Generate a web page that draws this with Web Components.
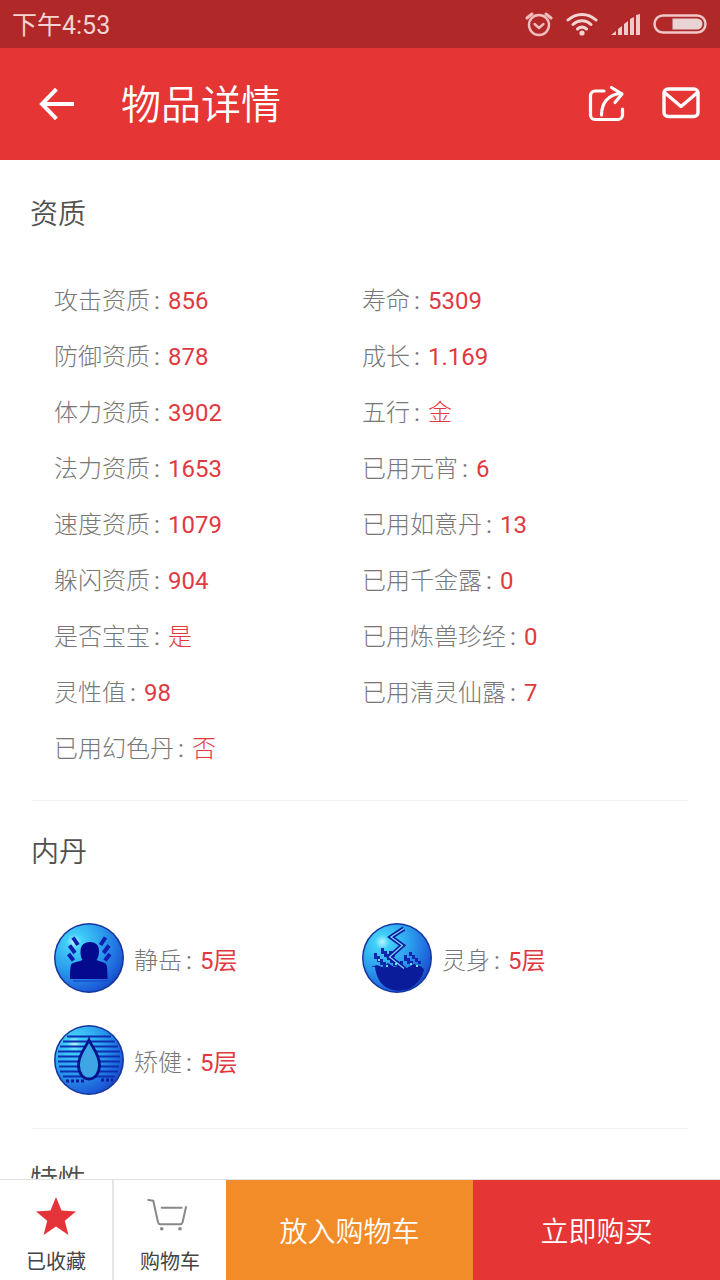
<!DOCTYPE html>
<html lang="zh-CN"><head><meta charset="utf-8"><title>物品详情</title>
<style>
html,body{margin:0;padding:0;background:#fff}
body{font-family:Roboto,"Noto Sans CJK SC",sans-serif;width:720px;height:1280px;overflow:hidden}
app-shell{height:1280px}
</style></head>
<body>
<app-shell>
  <status-bar slot="status" time="下午4:53"></status-bar>
  <app-header slot="header" title="物品详情"></app-header>
  <spec-section heading="资质" first>
    <spec-item label="攻击资质">856</spec-item><spec-item label="寿命">5309</spec-item>
    <spec-item label="防御资质">878</spec-item><spec-item label="成长">1.169</spec-item>
    <spec-item label="体力资质">3902</spec-item><spec-item label="五行" cjk>金</spec-item>
    <spec-item label="法力资质">1653</spec-item><spec-item label="已用元宵">6</spec-item>
    <spec-item label="速度资质">1079</spec-item><spec-item label="已用如意丹">13</spec-item>
    <spec-item label="躲闪资质">904</spec-item><spec-item label="已用千金露">0</spec-item>
    <spec-item label="是否宝宝" cjk>是</spec-item><spec-item label="已用炼兽珍经">0</spec-item>
    <spec-item label="灵性值">98</spec-item><spec-item label="已用清灵仙露">7</spec-item>
    <spec-item label="已用幻色丹" cjk>否</spec-item>
  </spec-section>
  <spec-section heading="内丹" dan>
    <dan-item icon="1" label="静岳">5层</dan-item><dan-item icon="2" label="灵身">5层</dan-item>
    <dan-item icon="3" label="矫健">5层</dan-item>
  </spec-section>
  <spec-section heading="特性" last></spec-section>
  <action-bar slot="footer"></action-bar>
</app-shell>
<script>
function def(name, css, html){
  customElements.define(name, class extends HTMLElement{
    connectedCallback(){
      if(this.shadowRoot) return;
      const r=this.attachShadow({mode:'open'});
      r.innerHTML='<style>'+css+'</style>'+(typeof html==='function'?html(this):html);
    }
  });
}
def('app-shell',`:host{display:flex;flex-direction:column;width:720px;overflow:hidden}
.main{flex:1;min-height:0;overflow:hidden}`,
`<slot name="status"></slot><slot name="header"></slot><div class="main"><slot></slot></div><slot name="footer"></slot>`);

def('status-bar',`:host{display:flex;align-items:center;height:48px;flex:none;background:#b02828;color:#f3d3d3;padding:0 12px;box-sizing:border-box}
.t{font-size:25px;flex:1;height:48px;line-height:52px}
svg{display:block;flex:none}`,
h=>`<span class="t">${h.getAttribute('time')}</span>
<svg width="28" height="26" viewBox="0 0 28 26" fill="none" stroke="#f0bcbc" stroke-width="2.4" stroke-linecap="round" stroke-linejoin="round" style="margin-right:13px;margin-top:-1px;margin-left:-1px">
<circle cx="14" cy="14" r="10"/><path d="M9.5 13l4.5 4 4.5-4"/><path d="M2 7l5-4M26 7l-5-4" stroke-width="3"/></svg>
<svg width="32" height="24" viewBox="0 0 32 24" fill="none" stroke="#f3d3d3" stroke-width="3" stroke-linecap="round" style="margin-right:13px;margin-top:-1px">
<path d="M2 8c8-7.500 20-7.500 28 0M7 12.500c5.500-5 12.500-5 18 0M11.500 17c3-2.500 6-2.500 9 0"/><circle cx="16" cy="21" r="2.600" fill="#f3d3d3" stroke="none"/></svg>
<svg width="31" height="22" viewBox="0 0 31 22" fill="#f0c8c8" style="margin-right:11px;margin-top:1px">
<path d="M0 21l5-4v4zM7 15l4-3v9H7zM13 10l4-3v14h-4zM19 5l4-2v18h-4zM25 1l4-1v21h-4z"/></svg>
<svg width="54" height="20" viewBox="0 0 54 20" style="margin-right:1px"><rect x="1.500" y="1.500" width="51" height="17" rx="8.500" fill="none" stroke="#f0c8c8" stroke-width="2.500"/><path d="M19.500 4.500H44a5.500 5.500 0 0 1 0 11H19.500z" fill="#e8d4d4"/></svg>`);

def('app-header',`:host{display:flex;align-items:center;height:112px;flex:none;background:#e53535;color:#fff}
.b{width:121px;flex:none;display:flex;padding-left:39px;box-sizing:border-box}
.t{flex:1;font-size:40px;height:112px;line-height:116px;font-weight:350}
svg{display:block;flex:none}`,
h=>`<div class="b"><svg width="36" height="34" viewBox="0 0 36 34" fill="none" stroke="#fff" stroke-width="4" stroke-linecap="square"><path d="M33 17H5M16 3.500L3 17l13 13.500"/></svg></div>
<div class="t">${h.getAttribute('title')}</div>
<svg width="38" height="38" viewBox="0 0 38 38" fill="none" stroke="#fff" stroke-width="3.200" stroke-linecap="round" stroke-linejoin="round" style="margin-right:36px;margin-top:-1px">
<path d="M16 6H7a4.500 4.500 0 0 0-4.500 4.500V30A4.500 4.500 0 0 0 7 34.500h23a4.500 4.500 0 0 0 4.500-4.500V24"/><path d="M13.500 30c0-11 6-21 20-21.500"/><path d="M23.500 2.500L34 9l-7 8.500"/></svg>
<svg width="38" height="32" viewBox="0 0 38 32" fill="none" stroke="#fff" stroke-width="3.400" stroke-linecap="round" stroke-linejoin="round" style="margin-right:20px;margin-top:-3px">
<rect x="2" y="2" width="34" height="27.500" rx="4"/><path d="M2.500 5.500L19 19.500 35.500 5.500"/></svg>`);

def('spec-section',`:host{display:block;padding:0 32px 0 30px;width:720px;box-sizing:border-box}
:host([first]){margin-top:1px}
.h{font-size:28px;line-height:104px;height:104px;color:#505050;font-weight:350}
:host([first]) .h{line-height:108px}
:host([dan]) .h{padding-left:1px}
.g{display:grid;grid-template-columns:308px 1fr;padding:8px 0 23px 24px}
:host([dan]) .g{padding:2px 0 17px 24px}
:host([last]) .g{display:none}
.line{height:1px;background:#f2f2f2;margin-left:2px}
:host([last]) .line{display:none}`,
h=>`<div class="h">${h.getAttribute('heading')}</div><div class="g"><slot></slot></div><div class="line"></div>`);

const ITEM=`font-size:24px;color:#777;white-space:nowrap;font-weight:300`;
const PARTS=`.c{display:inline-block;width:18px;padding-left:4px;box-sizing:border-box;font-weight:400}
.v{color:#e03a3f;font-weight:400}`;
def('spec-item',`:host{display:flex;align-items:baseline;height:56px;line-height:56px;${ITEM}}
:host([cjk]) .v{font-weight:300}
${PARTS}`,
h=>`<span>${h.getAttribute('label')}</span><span class="c">:</span><span class="v"><slot></slot></span>`);

const ICONS={
1:`<path d="M36 19c6 0 9 3.500 9 9.500 0 3.500-1 6.500-2.500 8.500 3.500 1.500 6.500 2 9 3.500 1.500 1 2 5.500 2 15.500H16c0-10 .5-14.500 2-15.500 3-1.500 7.500-2 10.500-3.500-1.500-2-2-5-2-8.500 0-6 3.500-9.500 9.500-9.500z" fill="#040a8e"/>
<path d="M19 58h34" stroke="#1b4ed0" stroke-width="1.500"/>
<g fill="none" stroke="#0f1eb0" stroke-width="4"><path d="M19 14.500l5 7.500M15.500 22.500l5.500 7.500M14.500 31l5 6.500"/><path d="M51.500 14.500l-5 7.500M55 22.500l-5.500 7.500M56 31l-5 6.500"/></g>`,
2:`<path d="M9 44l6-2 5 2 6-4 6 4 7-2 6 3 7-4 6 2 4 3c-1 8-7 16-15 20-9 3-18 2-25-3-5-4-8-11-9-19z" fill="#0a1c9a"/>
<g fill="#0c26ac"><path d="M12 30h3v3h3v3h3v3h3v3h3v3h-6v-3h-3v-3h-3v-3h-3zM19 25h3v3h3v3h3v3h3v3h3v6h-3v-3h-3v-3h-3v-3h-3v-3h-3zM27 28h3v3h3v3h-3v-3h-3z"/><path d="M42 32h3v3h3v3h3v3h-6v-3h-3zM47 29h3v3h3v3h3v3h3v3h-3v-2h-3v-3h-3v-3h-3zM38 38h3v4h-3z"/></g>
<path d="M42 5.500L29 14l11.500 8.500L27.500 34l14.500 11.500" fill="none" stroke="#0a1ca0" stroke-width="4.600" stroke-linejoin="miter"/>
<path d="M42 5.500L29 14l11.500 8.500L27.500 34l14.500 11.500" fill="none" stroke="#7fd8ff" stroke-width="1.200"/>
<g fill="#7fd8ff"><rect x="16" y="36" width="2" height="2"/><rect x="24" y="42" width="2" height="2"/><rect x="33" y="40" width="2" height="2"/><rect x="48" y="40" width="2" height="2"/><rect x="54" y="42" width="2" height="2"/></g>`,
3:`<g stroke="#0c2eb0" stroke-width="1.900" fill="none"><path d="M13 11.500h44M9 16.500h52M6 21.500h58M4 26.500h62M4 31.500h62M4 36.500h62M5 41.500h60M6 46.500h58M9 51.500h52"/></g>
<path d="M35 15c3 7 10.500 14 10.500 25 0 8-4.500 14-10.500 14s-10.500-6-10.500-14c0-11 7.500-18 10.500-25z" fill="#3fa6e6" stroke="#04128c" stroke-width="2.800"/>
<path d="M47 55h12M12 56h20" stroke="#0a1c9a" stroke-width="3" stroke-dasharray="3 2"/>`};
def('dan-item',`:host{display:flex;align-items:center;height:102px;line-height:56px;${ITEM}}
svg{display:block;flex:none;margin-right:10px}
.w{display:flex;align-items:baseline;padding-top:6px}
${PARTS}`,
h=>{const i=h.getAttribute('icon');return `<svg width="70" height="70" viewBox="0 0 70 70">
<defs><radialGradient id="o${i}" cx="28%" cy="26%" r="92%"><stop offset="0" stop-color="#b6f6ff"/><stop offset=".12" stop-color="#42d0fa"/><stop offset=".48" stop-color="#2a9aec"/><stop offset=".82" stop-color="#1c5cd8"/><stop offset="1" stop-color="#123a9f"/></radialGradient></defs>
<circle cx="35" cy="35" r="35" fill="#14349f"/><circle cx="35" cy="35" r="33.500" fill="url(#o${i})"/>${ICONS[i]}</svg>
<div class="w"><span>${h.getAttribute('label')}</span><span class="c">:</span><span class="v"><slot></slot></span></div>`});

def('action-bar',`:host{display:flex;height:101px;flex:none;background:#fff;border-top:1px solid #e2e2e2;box-sizing:border-box}
.c{flex:none;display:flex;flex-direction:column;align-items:center;color:#444;font-size:20px;font-weight:400;box-sizing:border-box}
.c svg{display:block;flex:none}
.c span{line-height:24px;display:block}
.a{width:114px;border-right:2px solid #e6e6e6}
.d{width:112px}
.btn{flex:none;display:flex;align-items:center;justify-content:center;color:#fff;font-size:28px;font-weight:350;height:100px;box-sizing:border-box}
.o{width:247px;background:#f28c28}.r{width:247px;background:#e53535}`,
`<div class="c a"><svg width="42" height="40" viewBox="0 0 42 40" style="margin:16px 0 14px"><path d="M21 1l5.500 13.600 14.500.9-11.200 9.300 3.600 14.200L21 30.400 8.600 39l3.600-14.200L1 15.500l14.500-.9z" fill="#e5333a"/></svg><span>已收藏</span></div>
<div class="c d"><svg width="44" height="36" viewBox="0 0 44 36" fill="none" stroke="#888" stroke-width="2" stroke-linecap="round" stroke-linejoin="round" style="margin:17px 0 17px;transform:translateX(-2px)">
<path d="M2.300 3l5 .8 4.700 21.500c.4 1.400 1 2 2.400 2H34c1.400 0 2.200-.6 2.600-2L40 10M15.700 10.700h20"/><circle cx="15.700" cy="31.700" r="1.800" fill="#888" stroke="none"/><circle cx="34" cy="31.700" r="1.800" fill="#888" stroke="none"/></svg><span>购物车</span></div>
<div class="btn o">放入购物车</div><div class="btn r">立即购买</div>`);
</script>
</body></html>
